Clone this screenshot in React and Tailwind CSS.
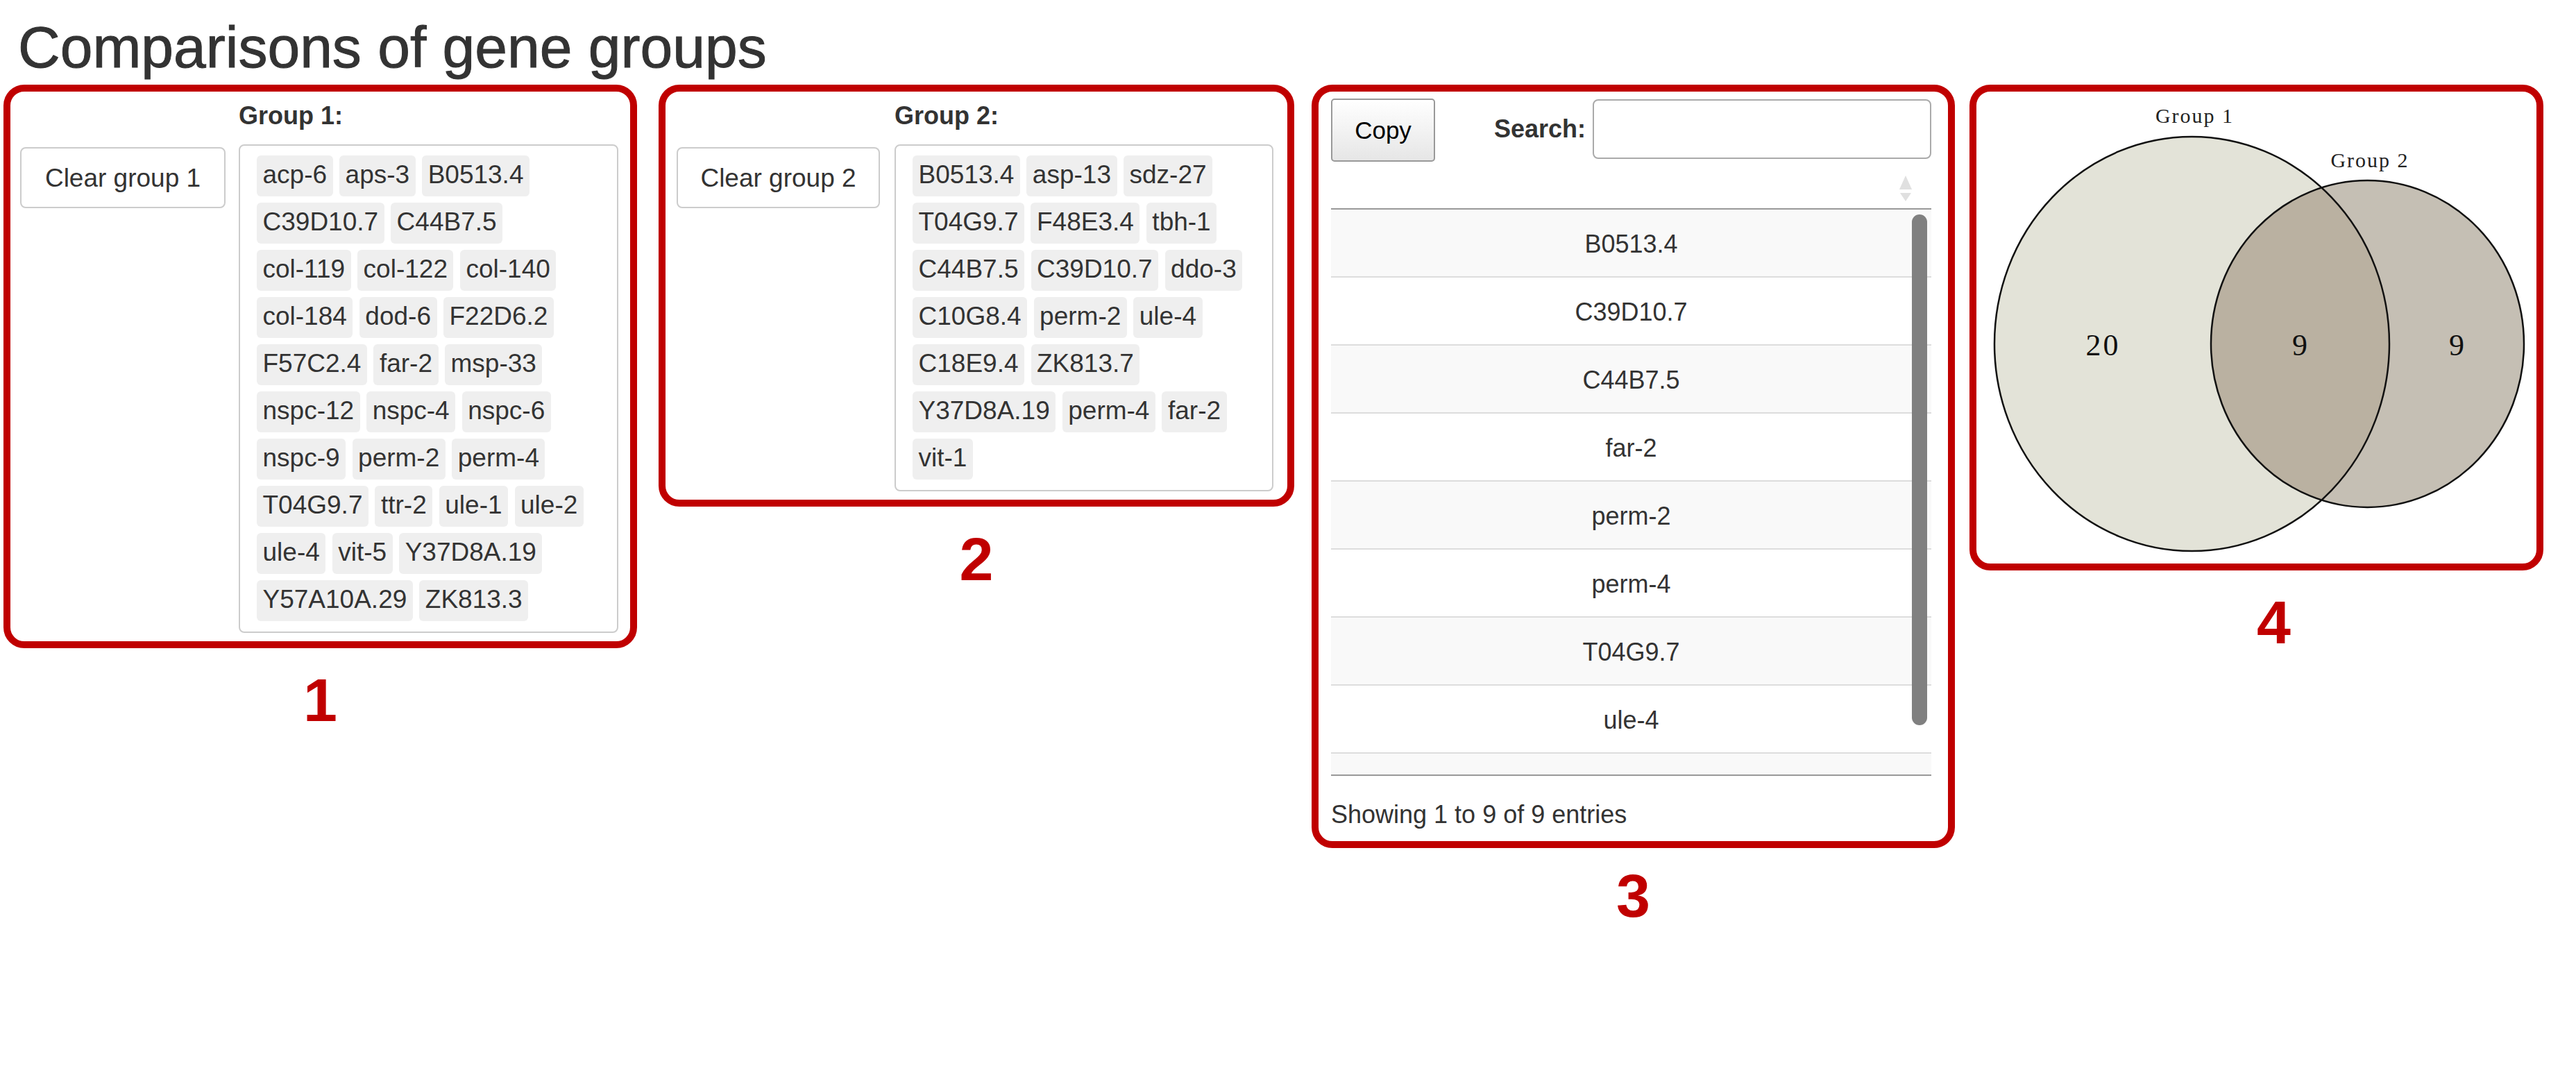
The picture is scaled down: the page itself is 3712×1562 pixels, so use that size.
import React from "react";

const group1Rows = [
  ["acp-6", "aps-3", "B0513.4"],
  ["C39D10.7", "C44B7.5"],
  ["col-119", "col-122", "col-140"],
  ["col-184", "dod-6", "F22D6.2"],
  ["F57C2.4", "far-2", "msp-33"],
  ["nspc-12", "nspc-4", "nspc-6"],
  ["nspc-9", "perm-2", "perm-4"],
  ["T04G9.7", "ttr-2", "ule-1", "ule-2"],
  ["ule-4", "vit-5", "Y37D8A.19"],
  ["Y57A10A.29", "ZK813.3"],
];

const group2Rows = [
  ["B0513.4", "asp-13", "sdz-27"],
  ["T04G9.7", "F48E3.4", "tbh-1"],
  ["C44B7.5", "C39D10.7", "ddo-3"],
  ["C10G8.4", "perm-2", "ule-4"],
  ["C18E9.4", "ZK813.7"],
  ["Y37D8A.19", "perm-4", "far-2"],
  ["vit-1"],
];

const common = [
  "B0513.4",
  "C39D10.7",
  "C44B7.5",
  "far-2",
  "perm-2",
  "perm-4",
  "T04G9.7",
  "ule-4",
  "",
];

function Tag({ children }) {
  return (
    <span className="h-[59px] px-[8.5px] pb-[5px] flex items-center rounded-[6px] bg-[#efefef] text-[37px] leading-none text-[#333] whitespace-nowrap">
      {children}
    </span>
  );
}

function GroupBox({ boxClass, btnClass, tagsClass, title, btn, rows }) {
  return (
    <div className={boxClass}>
      <div className={btnClass}>
        <button className="w-full h-[88px] border-2 border-[#cccccc] rounded-[8px] bg-white text-[37px] leading-none text-[#333]">
          {btn}
        </button>
      </div>
      <div className={tagsClass}>
        <div className="h-[50px] leading-[50px] text-[36px] font-bold text-[#333] whitespace-nowrap">
          {title}
        </div>
        <div className="mt-[16px] border-2 border-[#cccccc] rounded-[8px] pt-[14px] pl-[24px] pb-[15px] flex flex-col gap-[9px]">
          {rows.map((row, i) => (
            <div key={i} className="flex gap-[9.5px]">
              {row.map((t) => (
                <Tag key={t}>{t}</Tag>
              ))}
            </div>
          ))}
        </div>
      </div>
    </div>
  );
}

function Num({ children, cls }) {
  return <div className={cls}>{children}</div>;
}

function Venn() {
  return (
    <svg width="807" height="680" viewBox="0 0 807 680">
      <defs>
        <clipPath id="circ1">
          <ellipse cx="310.5" cy="363.5" rx="284.5" ry="298.5" />
        </clipPath>
      </defs>
      <ellipse cx="310.5" cy="363.5" rx="284.5" ry="298.5" fill="#e3e3d8" />
      <ellipse cx="563.5" cy="363.5" rx="225.5" ry="235.5" fill="#c5bfb4" />
      <ellipse
        cx="563.5"
        cy="363.5"
        rx="225.5"
        ry="235.5"
        fill="#bab1a1"
        clipPath="url(#circ1)"
      />
      <ellipse cx="310.5" cy="363.5" rx="284.5" ry="298.5" fill="none" stroke="#111" strokeWidth="2.5" />
      <ellipse cx="563.5" cy="363.5" rx="225.5" ry="235.5" fill="none" stroke="#111" strokeWidth="2.5" />
      <text x="314.5" y="45" textAnchor="middle" fontFamily="'Liberation Serif', serif" fontSize="30" letterSpacing="2" fill="#222">
        Group 1
      </text>
      <text x="567" y="109" textAnchor="middle" fontFamily="'Liberation Serif', serif" fontSize="30" letterSpacing="2" fill="#222">
        Group 2
      </text>
      <text x="182.5" y="380" textAnchor="middle" fontFamily="'Liberation Serif', serif" fontSize="44" letterSpacing="3" fill="#111">
        20
      </text>
      <text x="466" y="380" textAnchor="middle" fontFamily="'Liberation Serif', serif" fontSize="44" fill="#111">
        9
      </text>
      <text x="692" y="380" textAnchor="middle" fontFamily="'Liberation Serif', serif" fontSize="44" fill="#111">
        9
      </text>
    </svg>
  );
}

export default function App() {
  return (
    <div className="w-[3712px] min-h-[1562px] bg-white font-['Liberation_Sans',Arial,sans-serif] text-[#333]">
      <h2 className="pt-[24px] pl-[26px] h-[113px] text-[84px] leading-[88px] font-normal text-[#333] mb-[9px] [-webkit-text-stroke:1px_#333]">
        Comparisons of gene groups
      </h2>
      <div className="flex items-start pl-[5px]">
        {/* Column 1 */}
        <div className="w-[913px] flex flex-col">
          <GroupBox
            boxClass="w-[913px] border-[10px] border-[#c00000] rounded-[30px] pt-[10px] pl-[14px] pr-[17px] pb-[12px] flex gap-[19px]"
            btnClass="w-[296px] pt-[70px] shrink-0"
            tagsClass="w-[547px] shrink-0 flex flex-col"
            title="Group 1:"
            btn="Clear group 1"
            rows={group1Rows}
          />
          <Num cls="mt-[31px] text-center text-[88px] leading-[88px] font-bold text-[#c00000]">1</Num>
        </div>

        {/* Column 2 */}
        <div className="w-[916px] ml-[31px] flex flex-col">
          <GroupBox
            boxClass="w-[916px] border-[10px] border-[#c00000] rounded-[30px] pt-[10px] pl-[16px] pr-[20px] pb-[12px] flex gap-[21px]"
            btnClass="w-[293px] pt-[70px] shrink-0"
            tagsClass="w-[546px] shrink-0 flex flex-col"
            title="Group 2:"
            btn="Clear group 2"
            rows={group2Rows}
          />
          <Num cls="mt-[32px] text-center text-[88px] leading-[88px] font-bold text-[#c00000]">2</Num>
        </div>

        {/* Column 3 */}
        <div className="w-[927px] ml-[25px] flex flex-col">
          <div className="w-[927px] border-[10px] border-[#c00000] rounded-[30px] pt-[10px] pl-[18px] pr-[24px] pb-[13px] flex flex-col">
            <div className="flex items-start justify-between">
              <button className="w-[150px] h-[91px] border-2 border-[#999] rounded-[5px] bg-gradient-to-b from-white to-[#e6e6e6] text-[35px] leading-none text-black">
                Copy
              </button>
              <div className="mt-[1px] h-[86px] flex items-center gap-[10px]">
                <span className="text-[36px] font-bold text-[#333] leading-none">Search:</span>
                <div className="w-[488px] h-[86px] border-2 border-[#aaaaaa] rounded-[8px] bg-white" />
              </div>
            </div>
            <div className="h-[69px] border-b-2 border-[#999] flex items-start justify-end pt-[20px] pr-[28px]">
              <svg width="18" height="37" viewBox="0 0 18 37">
                <polygon points="0,20 9,0 18,20" fill="#e0e0e0" />
                <polygon points="1,25 17,25 9,37" fill="#e0e0e0" />
              </svg>
            </div>
            <div className="relative h-[816px] overflow-hidden border-b-2 border-[#999]">
              {common.map((g, i) => (
                <div
                  key={i}
                  className={
                    i % 2 === 0
                      ? "h-[98px] border-b-2 border-[#dddddd] bg-[#f9f9f9] flex items-center justify-center pt-[4px] text-[36px] leading-none text-[#333]"
                      : "h-[98px] border-b-2 border-[#dddddd] bg-white flex items-center justify-center pt-[4px] text-[36px] leading-none text-[#333]"
                  }
                >
                  {g}
                </div>
              ))}
              <div className="absolute top-[7px] right-[6px] w-[22px] h-[736px] rounded-full bg-[#808080]" />
            </div>
            <div className="mt-[31px] text-[36px] leading-[50px] text-[#333]">
              Showing 1 to 9 of 9 entries
            </div>
          </div>
          <Num cls="mt-[25px] text-center text-[88px] leading-[88px] font-bold text-[#c00000]">3</Num>
        </div>

        {/* Column 4 */}
        <div className="w-[827px] ml-[21px] flex flex-col">
          <div className="w-[827px] h-[700px] border-[10px] border-[#c00000] rounded-[30px] flex">
            <Venn />
          </div>
          <Num cls="mt-[31px] pl-[50px] text-center text-[88px] leading-[88px] font-bold text-[#c00000]">4</Num>
        </div>
      </div>
    </div>
  );
}
